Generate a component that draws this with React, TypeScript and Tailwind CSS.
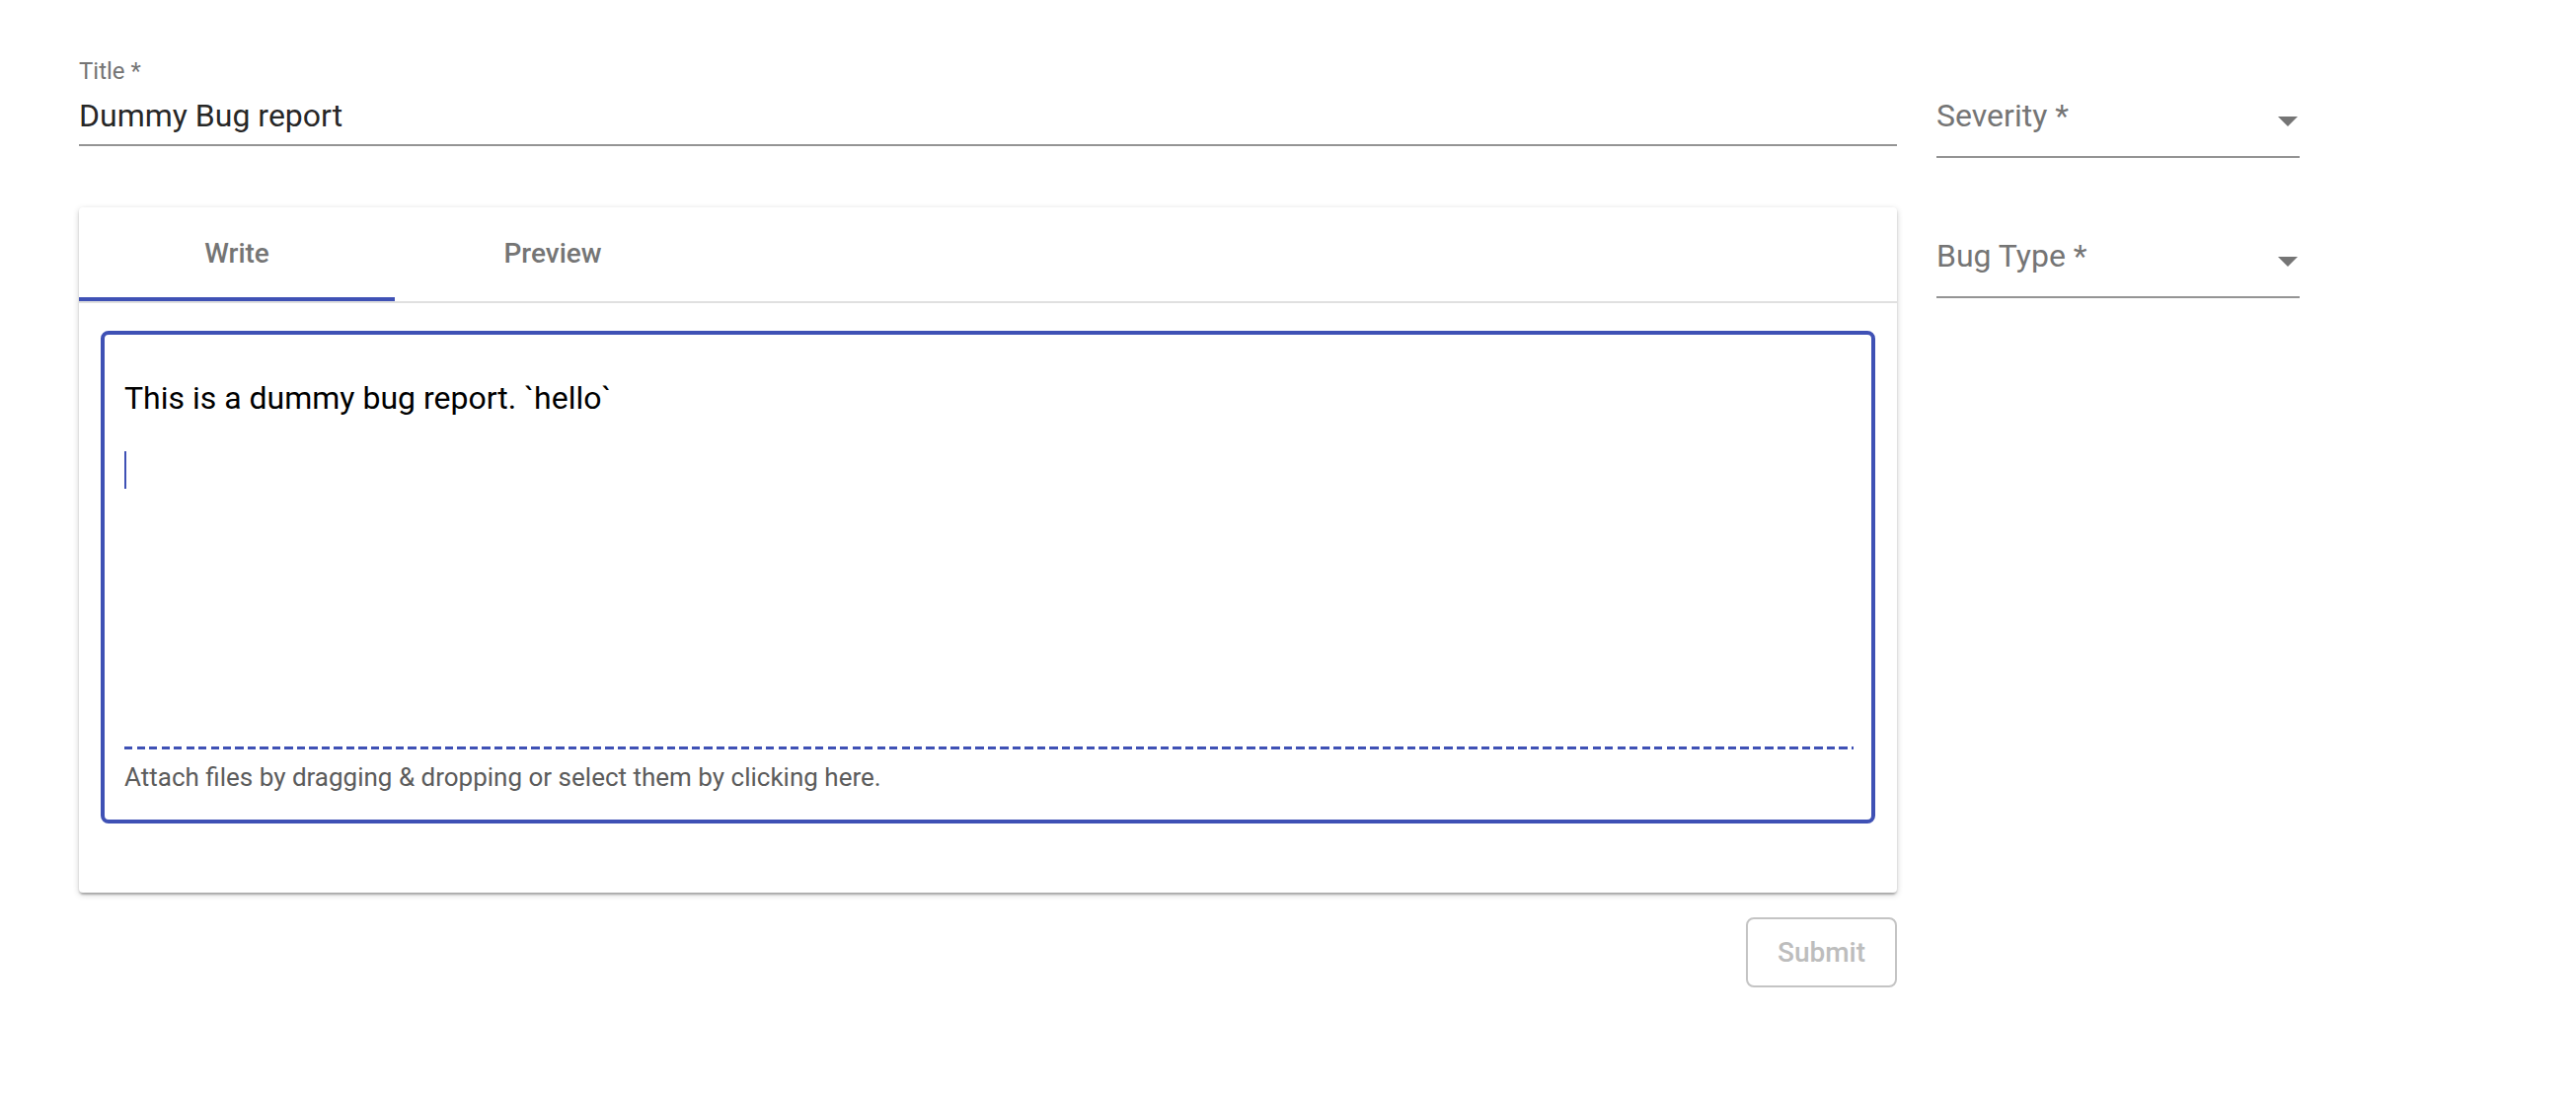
import React from 'react';

function SelectField({ label, className }: { label: string; className?: string }) {
  return (
    <div className={`flex items-center border-b-2 border-[#949494] pb-[22px] ${className ?? ''}`}>
      <span className="flex-1 h-[38px] text-[32px] leading-[38px] text-[#757575]">{label}</span>
      <svg className="mt-[12px] mr-[2px] w-[20px] h-[10px]" viewBox="0 0 20 10" aria-hidden="true">
        <path d="M0 0h20L10 10z" fill="#757575" />
      </svg>
    </div>
  );
}

export default function App() {
  return (
    <div className="min-h-screen bg-white font-['Roboto',sans-serif]">
      <div className="flex gap-[40px] pl-[80px] pt-[60px]">
        <div className="w-[1842px] flex flex-col">
          {/* title field */}
          <div className="flex flex-col">
            <label className="h-[24px] text-[24px] leading-[24px] text-[#757575]">Title *</label>
            <div className="mt-[14px] pb-[10px] border-b-2 border-[#949494]">
              <div className="h-[38px] text-[32px] leading-[38px] text-[#000000de]">Dummy Bug report</div>
            </div>
          </div>

          {/* editor card */}
          <div className="mt-[62px] bg-white rounded-[4px] shadow-[0_2px_2px_0_rgba(0,0,0,0.14),0_4px_2px_-2px_rgba(0,0,0,0.12),0_2px_6px_0_rgba(0,0,0,0.2)]">
            <div className="flex h-[95px]">
              <div className="w-[320px] flex flex-col">
                <div className="flex-1 flex items-center justify-center pt-[2px] text-[28px] font-medium text-[#757575]">Write</div>
                <div className="h-[4px] bg-[#3f51b5]" />
              </div>
              <div className="w-[320px] flex flex-col">
                <div className="flex-1 flex items-center justify-center pt-[2px] text-[28px] font-medium text-[#757575]">Preview</div>
                <div className="h-[4px]" />
              </div>
            </div>
            <div className="h-[2px] bg-[#e0e0e0]" />

            <div className="px-[22px] pt-[28px] pb-[70px]">
              <div className="border-4 border-[#3f51b5] rounded-[8px] px-[20px] pt-[45px] pb-[27px] flex flex-col">
                <p className="h-[38px] text-[32px] leading-[38px] text-black">This is a dummy bug report. `hello`</p>
                <div className="mt-[35px] h-[38px] w-[2px] bg-[#3f51b5]" />
                <div className="mt-[261px] mr-[-2px] h-[3px] bg-[repeating-linear-gradient(90deg,#3f51b5_0_8px,transparent_8px_12.5px)]" />
                <div className="mt-[12px] h-[32px] text-[26px] leading-[32px] text-[#5c5c5c]">
                  Attach files by dragging &amp; dropping or select them by clicking here.
                </div>
              </div>
            </div>
          </div>

          <div className="mt-[25px] flex justify-end">
            <button
              disabled
              className="w-[153px] h-[71px] border-2 border-[#c4c4c4] rounded-[8px] text-[28px] font-medium text-[#bdbdbd] bg-white"
            >
              Submit
            </button>
          </div>
        </div>

        <div className="w-[368px] flex flex-col pt-[38px]">
          <SelectField label="Severity *" />
          <SelectField label="Bug Type *" className="mt-[80px]" />
        </div>
      </div>
    </div>
  );
}
